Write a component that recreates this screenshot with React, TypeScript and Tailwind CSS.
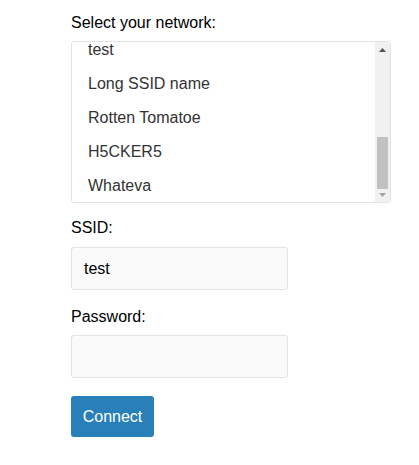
import React from "react";

const items = ["test", "Long SSID name", "Rotten Tomatoe", "H5CKER5", "Whateva"];

export default function App() {
  return (
    <div className="min-h-[465px] w-[419px] bg-white pl-[71px] pt-[11px] text-[16px] text-black" style={{ fontFamily: '"Liberation Sans", Arial, sans-serif' }}>
      <div className="h-[24px] leading-[24px]">Select your network:</div>
      <div className="mt-[6px] flex h-[162px] w-[320px] overflow-hidden rounded-[3px] border border-[#e3e3e3] bg-white">
        <div className="flex-1 overflow-hidden">
          <div className="mt-[-9px]">
            {items.map((t) => (
              <div key={t} className="h-[34px] pl-[16px] leading-[34px] text-[#333333]">{t}</div>
            ))}
          </div>
        </div>
        <div className="flex w-[15px] flex-col items-center bg-[#f1f1f1]">
          <svg width="15" height="15" viewBox="0 0 15 15" className="shrink-0">
            <polygon points="4,10 11,10 7.5,6" fill="#505050" />
          </svg>
          <div className="mt-[80px] h-[52px] w-[11px] bg-[#c1c1c1]" />
          <svg width="15" height="13" viewBox="0 0 15 13" className="shrink-0">
            <polygon points="4,4 11,4 7.5,8" fill="#a3a3a3" />
          </svg>
        </div>
      </div>
      <div className="mt-[13px] h-[24px] leading-[24px]">SSID:</div>
      <div className="mt-[7px] flex h-[43px] w-[217px] items-center rounded-[3px] border border-[#e3e3e3] bg-[#fafafa] pl-[12px]">test</div>
      <div className="mt-[15px] h-[24px] leading-[24px]">Password:</div>
      <div className="mt-[6px] h-[43px] w-[217px] rounded-[3px] border border-[#e3e3e3] bg-[#fafafa]" />
      <button className="mt-[18px] flex h-[41px] w-[83px] items-center justify-center rounded-[3px] bg-[#2980b9] text-white">Connect</button>
    </div>
  );
}
